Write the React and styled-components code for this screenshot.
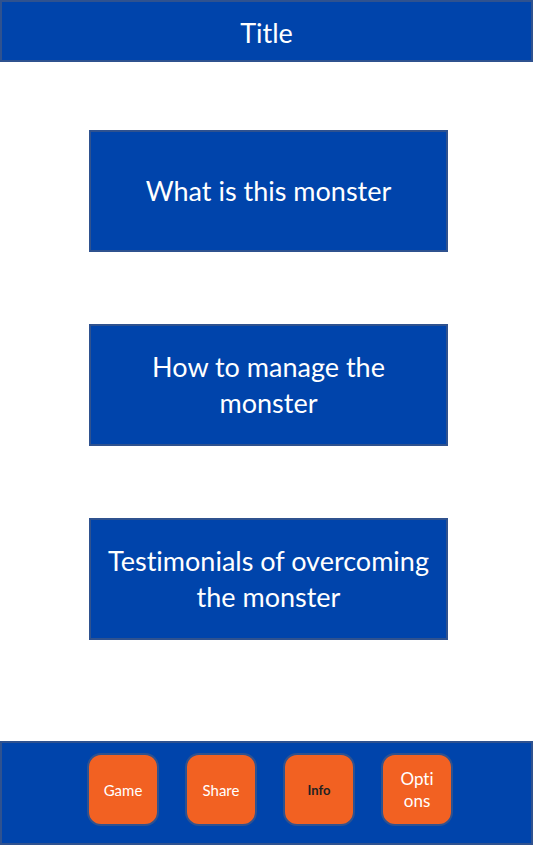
import React from "react";
import styled, { createGlobalStyle } from "styled-components";

const Global = createGlobalStyle`
  *, *::before, *::after { box-sizing: border-box; }
  body {
    margin: 0;
    background: #fff;
    font-family: Lato, "Open Sans", sans-serif;
    font-variant-ligatures: none;
  }
  button { font-family: inherit; font-variant-ligatures: inherit; cursor: pointer; }
`;

const Page = styled.div`
  min-height: 100vh;
  display: flex;
  flex-direction: column;
`;

const Header = styled.header`
  display: flex;
  align-items: center;
  justify-content: center;
  min-height: 62px;
  padding-top: 4px;
  background: #0044ab;
  border: 2px solid #2f528f;
`;

const Title = styled.h1`
  margin: 0;
  font-size: 27px;
  line-height: 36px;
  font-weight: 400;
  color: #fff;
`;

const Topics = styled.main`
  flex: 1;
  display: flex;
  flex-direction: column;
  align-items: center;
  gap: 72px;
  padding: 68px 85px 0 89px;
`;

const Topic = styled.button`
  width: 100%;
  min-height: 122px;
  padding: 0 12px;
  background: #0044ab;
  border: 2px solid #2f528f;
  color: #fff;
  font-size: 27px;
  line-height: 36px;
`;

const Nav = styled.nav`
  display: flex;
  align-items: flex-start;
  justify-content: center;
  gap: 26px;
  min-height: 104px;
  margin-bottom: 1px;
  padding: 10px 0 0 7px;
  background: #0044ab;
  border: 2px solid #2f528f;
`;

const labelSizes = { small: "13px", medium: "15px", large: "17px" };

const NavButton = styled.button`
  width: 72px;
  height: 73px;
  padding: 0 14px;
  background: #f26122;
  border: 2px solid #2f528f;
  border-radius: 14px;
  color: ${(p) => (p.$current ? "#222" : "#fff")};
  font-size: ${(p) => labelSizes[p.$size]};
  font-weight: ${(p) => (p.$current ? 700 : 400)};
  line-height: 22px;
`;

const topics = [
  "What is this monster",
  "How to manage the monster",
  "Testimonials of overcoming the monster",
];

export default function App() {
  return (
    <Page>
      <Global />
      <Header>
        <Title>Title</Title>
      </Header>
      <Topics>
        {topics.map((topic) => (
          <Topic key={topic} type="button">{topic}</Topic>
        ))}
      </Topics>
      <Nav>
        <NavButton type="button" $size="medium">Game</NavButton>
        <NavButton type="button" $size="medium">Share</NavButton>
        <NavButton type="button" $size="small" $current aria-current="page">Info</NavButton>
        <NavButton type="button" $size="large">Opti<wbr />ons</NavButton>
      </Nav>
    </Page>
  );
}
